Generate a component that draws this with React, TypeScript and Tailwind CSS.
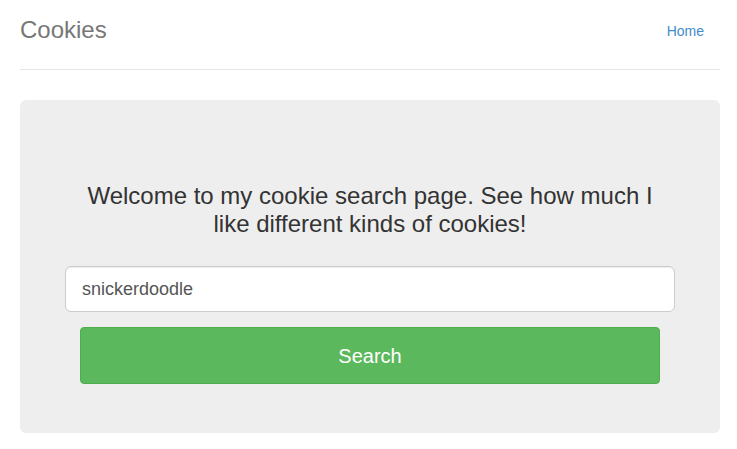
export default function App() {
  return (
    <div className="min-h-[449px] bg-white pl-5 pr-[17px] font-['Liberation_Sans',Arial,sans-serif]">
      <header className="flex h-[70px] items-start justify-between border-b border-[#e5e5e5]">
        <h3 className="mt-[10px] text-[24px] leading-[40px] text-[#777]">Cookies</h3>
        <nav className="mt-[11px] pr-[16px]">
          <a href="#" className="text-[14px] leading-[40px] text-[#428bca]">
            Home
          </a>
        </nav>
      </header>

      <section className="mt-[30px] flex h-[333px] flex-col items-center rounded-[6px] bg-[#eee] pt-[82px]">
        <h3 className="w-[580px] text-center text-[24px] leading-[28px] text-[#333]">
          Welcome to my cookie search page. See how much I like different kinds of cookies!
        </h3>
        <form className="mt-[28px] flex w-[610px] flex-col items-center" onSubmit={(e) => e.preventDefault()}>
          <input
            type="text"
            defaultValue="snickerdoodle"
            className="h-[46px] w-full rounded-[6px] border border-[#ccc] bg-white px-4 text-[18px] text-[#555] shadow-[inset_0_1px_1px_rgba(0,0,0,0.075)] outline-none"
          />
          <button
            type="submit"
            className="mt-[15px] h-[57px] w-[580px] rounded-[4px] border border-[#4cae4c] bg-[#5cb85c] text-[20px] text-white"
          >
            Search
          </button>
        </form>
      </section>
    </div>
  );
}
